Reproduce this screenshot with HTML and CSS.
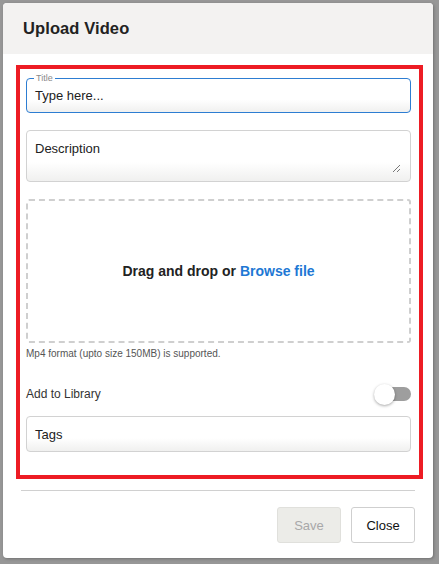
FILE: index.html
```html
<!DOCTYPE html>
<html>
<head>
<meta charset="utf-8">
<link rel="stylesheet" href="styles.css">
</head>
<body>
<div class="modal">
  <div class="modal-header"><h1 class="modal-title">Upload Video</h1></div>
  <div class="modal-body">
    <div class="frame">
      <div class="field field-active">
        <span class="field-label">Title</span>
        <span class="field-text">Type here...</span>
      </div>
      <div class="field field-area">
        <span class="field-text">Description</span>
        <svg class="resize" width="9" height="9" viewBox="0 0 9 9"><path d="M8 1L1 8M8 5L5 8" stroke="#777" stroke-width="1"/></svg>
      </div>
      <div class="dropzone">
        <span class="drop-text">Drag and drop or <span class="browse">Browse file</span></span>
      </div>
      <div class="hint">Mp4 format (upto size 150MB) is supported.</div>
      <div class="toggle-row">
        <span class="toggle-label">Add to Library</span>
        <span class="toggle"><span class="track"></span><span class="knob"></span></span>
      </div>
      <div class="field">
        <span class="field-text">Tags</span>
      </div>
    </div>
  </div>
  <div class="modal-footer">
    <button class="btn btn-disabled">Save</button>
    <button class="btn">Close</button>
  </div>
</div>
</body>
</html>
```
FILE: styles.css
```css
* { box-sizing: border-box; }
html, body { margin: 0; }
body {
  background: #979797;
  padding: 3px 0 0 3px;
  font-family: "Liberation Sans", Arial, sans-serif;
  height: 564px;
  overflow: hidden;
}
.modal {
  width: 430px;
  height: 555px;
  background: #fff;
  border-radius: 4px;
  overflow: hidden;
  display: flex;
  flex-direction: column;
  box-shadow: 1px 1px 3px rgba(0,0,0,0.25);
}
.modal-header {
  height: 51px;
  background: #f3f2f1;
  display: flex;
  align-items: center;
  padding: 0 20px;
  flex: none;
}
.modal-title {
  margin: 0;
  font-size: 16.5px;
  font-weight: bold;
  color: #222;
  letter-spacing: 0.1px;
}
.modal-body {
  padding: 11px 10px 0 13px;
}
.frame {
  border: 4px solid #ed1c24;
  height: 414px;
  padding: 9px 8px 0 6px;
  display: flex;
  flex-direction: column;
}
.field {
  position: relative;
  height: 36px;
  border: 1px solid #d2d2d2;
  border-radius: 4px;
  background: linear-gradient(to bottom, #fff 0%, #fff 62%, #f0f0ef 100%);
  display: flex;
  align-items: center;
  padding: 0 8px;
  flex: none;
}
.field + .field { margin-top: 17px; }
.field-active { border-color: #2d7dd2; height: 35px; }
.field-label {
  position: absolute;
  left: 7px;
  top: -6px;
  font-size: 9px;
  line-height: 10px;
  color: #8a8a8a;
  background: #fff;
  padding: 0 2px;
}
.field-text {
  font-size: 13px;
  color: #222;
}
.field-area {
  height: 52px;
  align-items: flex-start;
  padding-top: 10px;
}
.resize {
  position: absolute;
  right: 9px;
  bottom: 8px;
}
.dropzone {
  margin-top: 17px;
  height: 144px;
  border: 2px dashed #cfcfcf;
  border-radius: 3px;
  display: flex;
  align-items: center;
  justify-content: center;
  flex: none;
}
.drop-text {
  font-size: 14px;
  font-weight: bold;
  color: #222;
}
.browse { color: #1e78d4; }
.hint {
  margin-top: 5px;
  font-size: 10px;
  line-height: 12px;
  color: #555;
}
.toggle-row {
  margin-top: 23px;
  height: 22px;
  display: flex;
  align-items: center;
  justify-content: space-between;
}
.toggle-label {
  font-size: 12px;
  color: #333;
}
.toggle {
  position: relative;
  width: 37px;
  height: 22px;
  display: block;
}
.track {
  position: absolute;
  left: 11px;
  right: 0;
  top: 4px;
  height: 14px;
  border-radius: 7px;
  background: #9e9e9e;
}
.knob {
  position: absolute;
  left: 0;
  top: 1px;
  width: 21px;
  height: 21px;
  border-radius: 50%;
  background: #fff;
  box-shadow: 0 1px 3px rgba(0,0,0,0.35);
}
.toggle-row + .field { margin-top: 11px; }
.modal-footer {
  margin: 11px 18px 0 18px;
  border-top: 1px solid #d0d0d0;
  padding-top: 16px;
  display: flex;
  justify-content: flex-end;
  gap: 10px;
}
.btn {
  width: 64px;
  height: 36px;
  border: 1px solid #cfcfcf;
  border-radius: 3px;
  background: #fff;
  font-family: "Liberation Sans", Arial, sans-serif;
  font-size: 13px;
  color: #111;
  padding: 0;
}
.btn-disabled {
  background: #ecece8;
  border-color: #e0e0dc;
  color: #a8a8a8;
}
```
